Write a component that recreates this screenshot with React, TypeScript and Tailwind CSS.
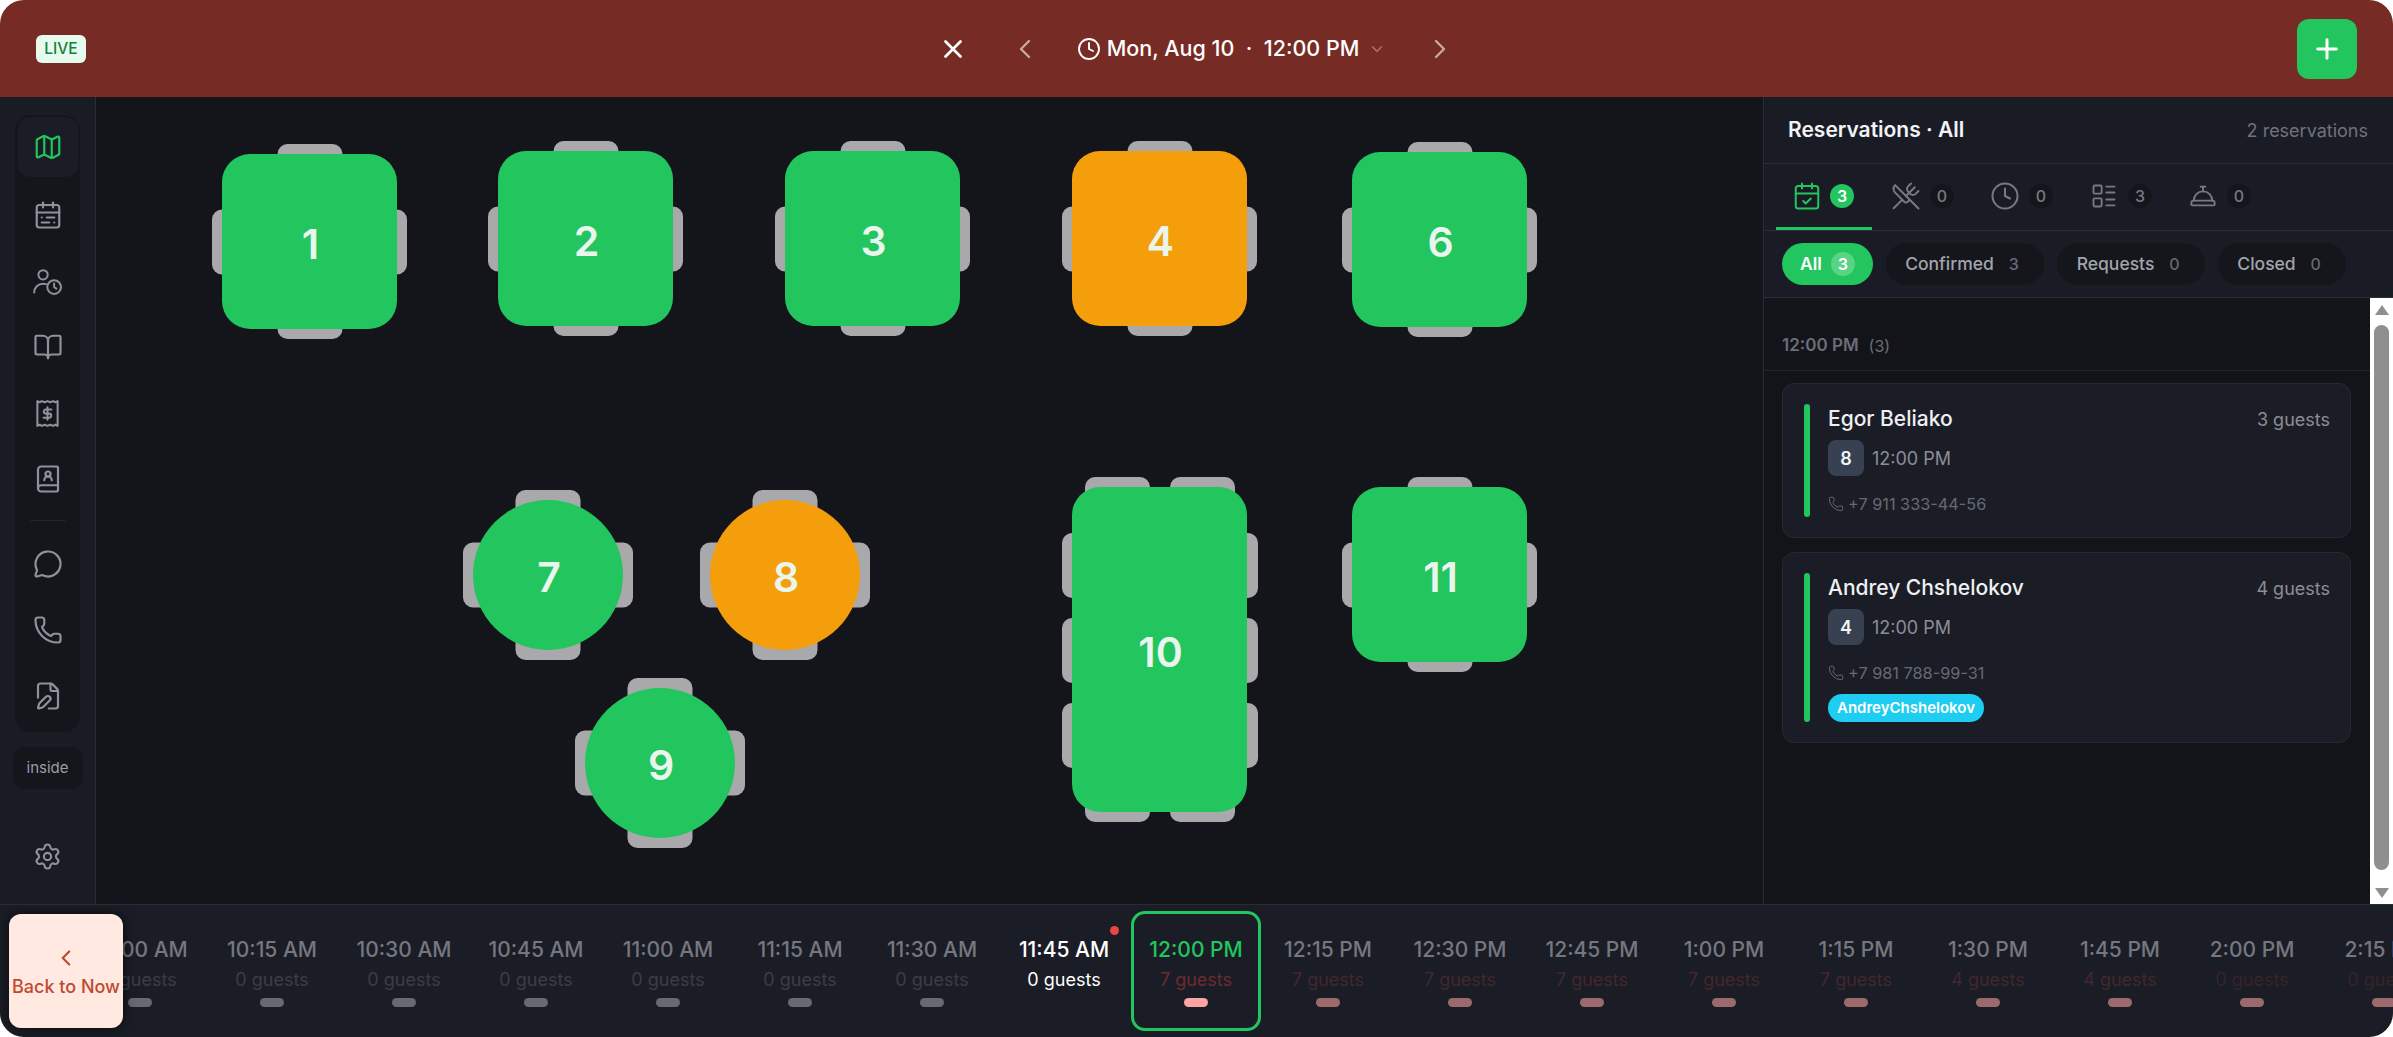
import type { CSSProperties } from 'react'
import {
  BookOpen, BookUser, CalendarCheck, CalendarRange, ChevronDown, ChevronLeft, ChevronRight, Clock,
  ConciergeBell, FilePen, LayoutList, Map as MapIcon, MessageCircle, Phone, Plus, Settings, UtensilsCrossed, X,
} from 'lucide-react'

type TableProps = {
  n: number
  x: number
  y: number
  w?: number
  h?: number
  round?: boolean
  color?: 'green' | 'amber'
}

const tables: TableProps[] = [
  { n: 1, x: 222, y: 57 },
  { n: 2, x: 498, y: 54 },
  { n: 3, x: 785, y: 54 },
  { n: 4, x: 1072, y: 54, color: 'amber' },
  { n: 6, x: 1352, y: 55 },
  { n: 7, x: 473, y: 403, w: 150, h: 150, round: true },
  { n: 8, x: 710, y: 403, w: 150, h: 150, round: true, color: 'amber' },
  { n: 9, x: 585, y: 591, w: 150, h: 150, round: true },
  { n: 10, x: 1072, y: 390, w: 175, h: 325 },
  { n: 11, x: 1352, y: 390 },
]

function Chair({ className, style }: { className: string; style?: CSSProperties }) {
  return <div className={`absolute rounded-[10px] bg-[#a9a9ab] ${className}`} style={style} />
}

function Table({ n, x, y, w = 175, h = 175, round, color = 'green' }: TableProps) {
  const long = h > w
  return (
    <div className="absolute" style={{ left: x, top: y, width: w, height: h }}>
      {long ? (
        <>
          <Chair className="left-[13px] -top-[10px] h-[40px] w-[65px]" />
          <Chair className="right-[12px] -top-[10px] h-[40px] w-[65px]" />
          <Chair className="left-[13px] -bottom-[10px] h-[40px] w-[65px]" />
          <Chair className="right-[12px] -bottom-[10px] h-[40px] w-[65px]" />
          {[46, 131, 216].map(t => (
            <div key={t}>
              <Chair className="-left-[10px] h-[65px] w-[40px]" style={{ top: t }} />
              <Chair className="-right-[11px] h-[65px] w-[40px]" style={{ top: t }} />
            </div>
          ))}
        </>
      ) : (
        <>
          <Chair className="left-1/2 -top-[10px] h-[40px] w-[65px] -translate-x-1/2" />
          <Chair className="left-1/2 -bottom-[10px] h-[40px] w-[65px] -translate-x-1/2" />
          <Chair className="top-1/2 -left-[10px] h-[65px] w-[40px] -translate-y-1/2" />
          <Chair className="top-1/2 -right-[10px] h-[65px] w-[40px] -translate-y-1/2" />
        </>
      )}
      <div
        className={`absolute inset-0 flex items-center justify-center pt-[6px] pl-[2px] text-[41px] font-semibold text-[#e9f5ed] ${
          round ? 'rounded-full' : 'rounded-[28px]'
        } ${color === 'amber' ? 'bg-[#f59e0b]' : 'bg-[#22c55e]'}`}
      >
        {n}
      </div>
    </div>
  )
}

function UserClockIcon() {
  return (
    <svg width="31" height="27" viewBox="0 0 28 24" fill="none" stroke="currentColor" strokeWidth="1.8" strokeLinecap="round" strokeLinejoin="round">
      <circle cx="10" cy="6" r="4.2" />
      <path d="M2 22c0-4.6 3.4-8 8-8 1 0 1.8.1 2.6.4" />
      <circle cx="20" cy="17" r="6.2" />
      <path d="M20 13.8V17l2 1.4" />
    </svg>
  )
}

function ReceiptDollarIcon() {
  return (
    <svg width="27" height="27" viewBox="0 0 24 24" fill="none" stroke="currentColor" strokeWidth="1.8" strokeLinejoin="round" strokeLinecap="round">
      <path d="M3 1v22l2-1 2 1 2.5-1 2.5 1 2.5-1 2.5 1 2-1 2 1V1l-2 1-2-1-2.5 1L12 1 9.5 2 7 1 5 2z" />
      <path d="M15.5 8.5h-5a1.8 1.8 0 0 0 0 3.6h3a1.8 1.8 0 0 1 0 3.6h-5M12 6.5v11" />
    </svg>
  )
}

function SideNav() {
  const iconClass = 'flex h-[66px] w-[60px] items-center justify-center text-[#8f929c]'
  return (
    <aside className="flex w-[96px] shrink-0 flex-col items-center border-r border-[#2a2c36] bg-[#1a1c25]">
      <div className="mt-[18px] flex w-[65px] flex-col items-center rounded-2xl bg-[#14161c] pt-[2px] pb-[3px]">
        <div className="flex h-[60px] w-[60px] items-center justify-center rounded-xl bg-[#1b1d26] text-[#22c55e]">
          <MapIcon size={30} strokeWidth={1.75} />
        </div>
        <div className={`${iconClass} mt-[5px]`}><CalendarRange size={30} strokeWidth={1.75} /></div>
        <div className={iconClass}><UserClockIcon /></div>
        <div className={iconClass}><BookOpen size={30} strokeWidth={1.75} /></div>
        <div className={iconClass}><ReceiptDollarIcon /></div>
        <div className={iconClass}><BookUser size={30} strokeWidth={1.75} /></div>
        <div className="mt-[8px] mb-[10px] h-px w-[36px] bg-[#23252e]" />
        <div className={iconClass}><MessageCircle size={30} strokeWidth={1.75} /></div>
        <div className={iconClass}><Phone size={30} strokeWidth={1.75} /></div>
        <div className={iconClass}><FilePen size={30} strokeWidth={1.75} /></div>
      </div>
      <div className="mt-[15px] flex h-[42px] w-[70px] items-center justify-center rounded-xl bg-[#14161c] text-[15px] text-[#9a9da6]">
        inside
      </div>
      <div className="mt-[53px] text-[#8f929c]">
        <Settings size={29} strokeWidth={1.75} />
      </div>
    </aside>
  )
}

const panelTabs = [
  { icon: <UtensilsCrossed size={30} strokeWidth={1.6} />, count: 0 },
  { icon: <Clock size={30} strokeWidth={1.6} />, count: 0 },
  { icon: <LayoutList size={28} strokeWidth={1.6} className="mx-px" />, count: 3 },
  { icon: <ConciergeBell size={28} strokeWidth={1.6} className="mx-px" />, count: 0 },
]

const filters = [
  { label: 'Confirmed', count: 3, className: 'w-[158px]' },
  { label: 'Requests', count: 0, className: 'w-[148px]' },
  { label: 'Closed', count: 0, className: 'w-[128px]' },
]

function ReservationCard({ name, guests, table, phone, tag }: { name: string; guests: number; table: number; phone: string; tag?: string }) {
  return (
    <div className="flex rounded-xl border border-[#262833] bg-[#1b1d26] pt-[20px] pr-[20px] pb-[20px] pl-[21px]">
      <div className="w-[6px] shrink-0 rounded-full bg-[#22c55e]" />
      <div className={`ml-[18px] min-w-0 flex-1 ${tag ? '' : 'pb-[3px]'}`}>
        <div className="flex h-[30px] items-center justify-between">
          <span className="text-[21px] font-medium text-[#eef0f3]">{name}</span>
          <span className="text-[18px] text-[#8b8e97]">{guests} guests</span>
        </div>
        <div className="mt-[6px] flex items-center gap-[8px]">
          <span className="flex h-[36px] w-[36px] items-center justify-center rounded-lg bg-[#374151] text-[18px] font-semibold text-[#f1f3f5]">{table}</span>
          <span className="text-[18px] text-[#8b8e97]">12:00 PM</span>
        </div>
        <div className="mt-[18px] flex h-[20px] items-center gap-[4px] text-[16.3px] text-[#666973]">
          <Phone size={16} strokeWidth={1.5} />
          <span>{phone}</span>
        </div>
        {tag && (
          <span className="mt-[11px] block h-[28px] w-fit rounded-full bg-[#1fcdf3] px-[9px] text-[15px] leading-[28px] font-semibold text-white">
            {tag}
          </span>
        )}
      </div>
    </div>
  )
}

function ReservationsPanel() {
  return (
    <section className="flex w-[630px] shrink-0 flex-col border-l border-[#2a2c36] bg-[#1a1c25]">
      <div className="flex h-[67px] shrink-0 items-center justify-between border-b border-[#2a2c36] pr-[25px] pl-[24px]">
        <h2 className="text-[21px] font-semibold text-[#f1f3f5]">Reservations · All</h2>
        <span className="text-[18px] text-[#6f727c]">2 reservations</span>
      </div>

      <div className="flex h-[67px] shrink-0 gap-[3px] border-b border-[#2a2c36] pl-[12px]">
        <div className="flex w-[96px] items-center gap-[8px] border-b-[3px] border-[#22c55e] pl-[16px] text-[#22c55e]">
          <CalendarCheck size={30} strokeWidth={1.6} />
          <span className="flex h-[24px] w-[24px] items-center justify-center rounded-full bg-[#22c55e] text-[16px] font-semibold text-white">3</span>
        </div>
        {panelTabs.map((t, i) => (
          <div key={i} className="flex w-[96px] items-center gap-[9px] pb-[3px] pl-[16px] text-[#777a84]">
            {t.icon}
            <span className="flex h-[24px] w-[24px] items-center justify-center rounded-full bg-[#14161c] text-[16px] font-medium text-[#777a84]">{t.count}</span>
          </div>
        ))}
      </div>

      <div className="flex h-[67px] shrink-0 items-center gap-[13px] border-b border-[#2a2c36] pl-[18px]">
        <div className="flex h-[42px] w-[91px] items-center justify-center gap-[9px] rounded-full bg-[#22c55e] text-[17.5px] font-semibold text-white">
          All
          <span className="flex h-[24px] w-[24px] items-center justify-center rounded-full bg-white/25 text-[16px]">3</span>
        </div>
        {filters.map(f => (
          <div key={f.label} className={`flex h-[42px] items-center justify-center gap-[9px] rounded-full bg-[#14161c] text-[17.5px] font-medium text-[#a2a5ad] ${f.className}`}>
            {f.label}
            <span className="flex h-[22px] w-[22px] items-center justify-center text-[16px] text-[#666973]">{f.count}</span>
          </div>
        ))}
      </div>

      <div className="flex min-h-0 flex-1">
        <div className="flex-1 bg-[#12141a]">
          <div className="flex h-[73px] items-end gap-[10px] border-b border-[#23252e] pb-[12px] pl-[18px] text-[#6b6e78]">
            <span className="text-[17px] font-semibold">12:00 PM</span>
            <span className="text-[16px]">(3)</span>
          </div>
          <div className="flex flex-col gap-[14px] pt-[12px] pr-[19px] pl-[18px]">
            <ReservationCard name="Egor Beliako" guests={3} table={8} phone="+7 911 333-44-56" />
            <ReservationCard name="Andrey Chshelokov" guests={4} table={4} phone="+7 981 788-99-31" tag="AndreyChshelokov" />
          </div>
        </div>

        {/* scrollbar */}
        <div className="flex w-[23px] shrink-0 flex-col items-center bg-white">
          <div className="mt-[7px] h-0 w-0 border-x-[7px] border-b-[10px] border-x-transparent border-b-[#8f8f8f]" />
          <div className="mt-[10px] h-[545px] w-[15px] rounded-full bg-[#8f8f8f]" />
          <div className="mt-auto mb-[6px] h-0 w-0 border-x-[7px] border-t-[10px] border-x-transparent border-t-[#8f8f8f]" />
        </div>
      </div>
    </section>
  )
}

type Slot = { time: string; guests: number; kind?: 'now' | 'selected'; busy?: boolean }

const slots: Slot[] = [
  { time: '10:00 AM', guests: 0 },
  { time: '10:15 AM', guests: 0 },
  { time: '10:30 AM', guests: 0 },
  { time: '10:45 AM', guests: 0 },
  { time: '11:00 AM', guests: 0 },
  { time: '11:15 AM', guests: 0 },
  { time: '11:30 AM', guests: 0 },
  { time: '11:45 AM', guests: 0, kind: 'now' },
  { time: '12:00 PM', guests: 7, kind: 'selected', busy: true },
  { time: '12:15 PM', guests: 7, busy: true },
  { time: '12:30 PM', guests: 7, busy: true },
  { time: '12:45 PM', guests: 7, busy: true },
  { time: '1:00 PM', guests: 7, busy: true },
  { time: '1:15 PM', guests: 7, busy: true },
  { time: '1:30 PM', guests: 4, busy: true },
  { time: '1:45 PM', guests: 4, busy: true },
  { time: '2:00 PM', guests: 0, busy: true },
  { time: '2:15 PM', guests: 0, busy: true },
]

function guestColor(s: Slot) {
  if (s.kind === 'now') return 'text-white'
  if (s.kind === 'selected') return 'text-[#6e2b2d]'
  if (!s.busy) return 'text-[#3a3d46]'
  return s.guests > 0 ? 'text-[#43272c]' : 'text-[#382329]'
}

function TimeSlot({ s }: { s: Slot }) {
  const selected = s.kind === 'selected'
  const now = s.kind === 'now'
  return (
    <div className={`relative flex h-[120px] w-[130px] shrink-0 flex-col items-center rounded-[14px] border-[3px] pt-[21px] ${selected ? 'border-[#22c55e]' : 'border-transparent'}`}>
      {now && <span className="absolute top-[12px] right-[7px] h-[9px] w-[9px] rounded-full bg-[#ef4444]" />}
      <span className={`text-[21px] leading-[30px] font-medium whitespace-nowrap ${selected ? 'text-[#22c55e]' : now ? 'text-white' : 'text-[#75777f]'}`}>
        {s.time}
      </span>
      <span className={`text-[18px] leading-[30px] whitespace-nowrap ${guestColor(s)}`}>
        {s.guests} guests
      </span>
      {!now && (
        <span className={`mt-[3px] h-[9px] w-[24px] rounded-full ${selected ? 'bg-[#fda4a4]' : s.busy ? 'bg-[#9c6a6d]' : 'bg-[#676a72]'}`} />
      )}
    </div>
  )
}

function Timeline() {
  return (
    <footer className="relative flex h-[133px] shrink-0 items-center gap-[2px] overflow-hidden border-t border-[#2a2c36] bg-[#1b1d26] pl-[75px]">
      {slots.map(s => <TimeSlot key={s.time} s={s} />)}
      <div className="absolute top-[9px] left-[9px] flex h-[114px] w-[114px] flex-col items-center justify-center rounded-xl bg-[#ffe9e1] pt-[2px] text-[18px] font-medium whitespace-nowrap text-[#c2492f] shadow-[0_0_12px_rgba(0,0,0,0.7)]">
        <ChevronLeft size={26} className="mb-[2px]" />
        Back to Now
      </div>
    </footer>
  )
}

export default function App() {
  return (
    <div className="flex h-[1037px] w-[2393px] flex-col overflow-hidden rounded-[24px] font-['Inter',sans-serif]">
      <header className="flex h-[97px] shrink-0 items-center justify-between bg-[#772b25] pr-[36px] pl-[36px]">
        <span className="flex h-[28px] w-[50px] items-center justify-center rounded-md bg-[#e6fbed] text-[15.5px] font-medium text-[#15803d]">LIVE</span>
        <div className="ml-[11px] flex items-center text-white">
          <X size={30} strokeWidth={2.2} />
          <ChevronLeft size={32} strokeWidth={1.75} className="ml-[41px] text-white/60" />
          <Clock size={24} strokeWidth={1.9} className="ml-[36px]" />
          <span className="ml-[6px] text-[21.5px] font-medium whitespace-pre">Mon, Aug 10  ·  12:00 PM</span>
          <ChevronDown size={18} className="ml-[9px] text-white/35" />
          <ChevronRight size={32} strokeWidth={1.75} className="ml-[38px] text-white/60" />
        </div>
        <div className="flex h-[60px] w-[60px] items-center justify-center rounded-xl bg-[#22c55e] text-white">
          <Plus size={32} strokeWidth={2.2} />
        </div>
      </header>

      <div className="flex min-h-0 flex-1">
        <SideNav />
        <main className="relative flex-1 bg-[#13151b]">
          {tables.map(t => <Table key={t.n} {...t} x={t.x - 96} />)}
        </main>
        <ReservationsPanel />
      </div>

      <Timeline />
    </div>
  )
}
